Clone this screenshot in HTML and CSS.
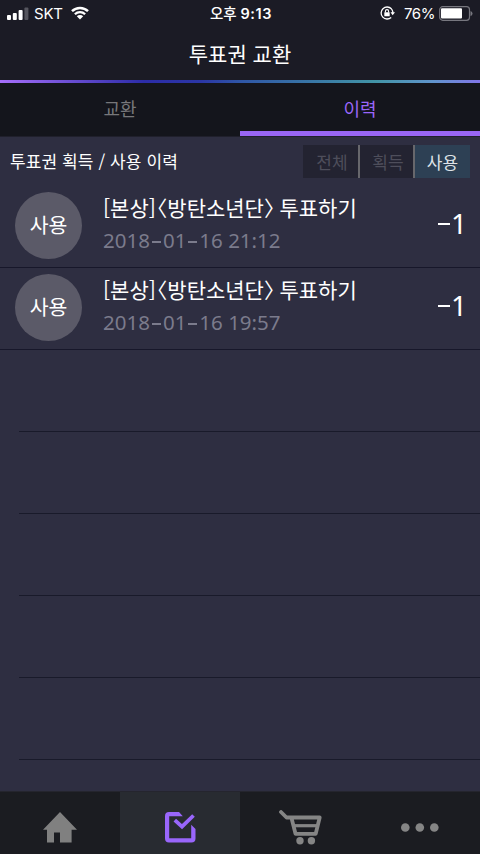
FILE: index.html
```
<!DOCTYPE html>
<html lang="ko">
<head>
    <meta charset="UTF-8">
    <meta name="viewport" content="width=device-width, initial-scale=1.0">
    <title>투표권 교환</title>
    <link rel="stylesheet" href="styles.css">
</head>
<body>
    <div class="status-bar">
        <div class="status-left">
            <svg class="signal" width="22" height="14" viewBox="0 0 22 14">
                <rect x="0" y="8" width="4" height="5" rx="1" fill="#fff"/>
                <rect x="5.8" y="6" width="4" height="7" rx="1" fill="#fff"/>
                <rect x="11.6" y="3" width="4" height="10" rx="1" fill="#fff"/>
                <rect x="17.4" y="0.5" width="4" height="12.5" rx="1" fill="#55555e"/>
            </svg>
            <span class="carrier">SKT</span>
            <svg class="wifi" width="18" height="14" viewBox="0 0 18 14">
                <path d="M1 5.2 A11.4 11.4 0 0 1 17 5.2" fill="none" stroke="#fff" stroke-width="2.5"/>
                <path d="M3.9 8.3 A7.2 7.2 0 0 1 14.1 8.3" fill="none" stroke="#fff" stroke-width="2.3"/>
                <path d="M9 13.5 L5.8 10.3 A4.5 4.5 0 0 1 12.2 10.3 Z" fill="#fff"/>
            </svg>
        </div>
        <div class="status-time">오후 <b>9:13</b></div>
        <div class="status-right">
            <svg class="lock" width="15" height="14" viewBox="0 0 15 14">
                <path d="M11.4 2.8 A6 6 0 1 0 11.2 11.4 M9.2 1.5 A6 6 0 0 1 12.9 7.2" fill="none" stroke="#fff" stroke-width="1.3"/>
                <path d="M10.5 6.3 H15 L12.7 9.2 Z" fill="#fff"/>
                <rect x="4.3" y="6.3" width="5.4" height="4" rx="0.5" fill="#fff"/>
                <path d="M5.4 6.5 V5.2 A1.6 1.6 0 0 1 8.6 5.2 V6.5" fill="none" stroke="#fff" stroke-width="1.1"/>
            </svg>
            <span class="percent">76%</span>
            <svg class="battery" width="34" height="15" viewBox="0 0 34 15">
                <rect x="0.7" y="0.7" width="29.8" height="13.6" rx="3" fill="none" stroke="#77777f" stroke-width="1.2"/>
                <rect x="2" y="2.2" width="21" height="10.4" rx="1" fill="#fff"/>
                <path d="M31.5 5 Q33.5 5.5 33.5 7.5 Q33.5 9.5 31.5 10 Z" fill="#77777f"/>
            </svg>
        </div>
    </div>

    <div class="header">투표권 교환</div>

    <div class="tabs">
        <div class="tab">교환</div>
        <div class="tab active">이력</div>
    </div>

    <div class="content">
        <div class="filter-bar">
            <div class="filter-title">투표권 획득 / 사용 이력</div>
            <div class="filters">
                <div class="filter">전체</div>
                <div class="filter">획득</div>
                <div class="filter selected">사용</div>
            </div>
        </div>

        <div class="row">
            <div class="badge">사용</div>
            <div class="info">
                <div class="title">[본상]<span class="name">〈방탄소년단〉</span>투표하기</div>
                <div class="date">2018<i></i>01<i></i>16 21:12</div>
            </div>
            <div class="amount"><i></i>1</div>
        </div>
        <div class="row">
            <div class="badge">사용</div>
            <div class="info">
                <div class="title">[본상]<span class="name">〈방탄소년단〉</span>투표하기</div>
                <div class="date">2018<i></i>01<i></i>16 19:57</div>
            </div>
            <div class="amount"><i></i>1</div>
        </div>
        <div class="empty"></div>
        <div class="empty"></div>
        <div class="empty"></div>
        <div class="empty"></div>
        <div class="empty"></div>
    </div>

    <div class="bottom-nav">
        <div class="nav-item">
            <svg width="34" height="31" viewBox="0 0 34 31">
                <path d="M17 0 L34 17.8 H28.6 V30.5 H17 V20.5 H11 V30.5 H4 V17.8 H0 Z" fill="#808080"/>
            </svg>
        </div>
        <div class="nav-item current">
            <svg width="31" height="31" viewBox="0 0 31 31">
                <path d="M14 0 H4 Q0 0 0 4 V26.5 Q0 30.5 4 30.5 H26.5 Q30.5 30.5 30.5 26.5 V17 L26.2 12.7 V26.3 H4.2 V4.2 H17.8 Z" fill="#9966fb"/>
                <path d="M9.8 8.2 L17 14.6 L28.5 3.5" fill="none" stroke="#9966fb" stroke-width="3.8"/>
            </svg>
        </div>
        <div class="nav-item">
            <svg width="43" height="35" viewBox="0 0 43 35">
                <path d="M2 2 L7.5 7.5 H40.7 L36.7 23.8 H16.5 L12.5 8" fill="none" stroke="#858585" stroke-width="3.8" stroke-linecap="round" stroke-linejoin="round"/>
                <path d="M14 15.7 H38" fill="none" stroke="#858585" stroke-width="3.2"/>
                <circle cx="21" cy="30.7" r="3.7" fill="#858585"/>
                <circle cx="32.4" cy="30.7" r="3.7" fill="#858585"/>
            </svg>
        </div>
        <div class="nav-item">
            <svg width="38" height="9" viewBox="0 0 38 9">
                <circle cx="4.3" cy="4.5" r="4.3" fill="#858585"/>
                <circle cx="18.8" cy="4.5" r="4.3" fill="#858585"/>
                <circle cx="33.3" cy="4.5" r="4.3" fill="#858585"/>
            </svg>
        </div>
    </div>
</body>
</html>
```
FILE: styles.css
```
* {
    box-sizing: border-box;
}
body {
    font-family: "Noto Sans CJK KR", sans-serif;
    margin: 0;
    height: 854px;
    overflow: hidden;
    display: flex;
    flex-direction: column;
    background: #2e2e41;
    color: #fff;
    font-weight: 400;
}
.status-bar {
    height: 27px;
    display: grid;
    grid-template-columns: 1fr auto 1fr;
    align-items: center;
    padding: 0 7px;
    background: #1b1b25;
    font-family: Inter, "Noto Sans CJK KR", sans-serif;
    font-size: 15px;
}
.status-left,
.status-right {
    display: flex;
    align-items: center;
}
.status-right {
    justify-content: flex-end;
}
.carrier {
    margin-left: 5px;
    letter-spacing: -0.2px;
}
.wifi {
    margin-left: 8px;
    margin-bottom: 2px;
}
.status-time {
    padding-left: 2px;
    font-size: 14.5px;
    font-weight: 500;
    line-height: 25px;
}
.status-time b {
    font-weight: 600;
    letter-spacing: 0.6px;
}
.lock {
    margin-bottom: 2px;
}
.percent {
    margin-left: 9px;
    margin-right: 4px;
    letter-spacing: -0.4px;
}
.header {
    height: 56px;
    line-height: 53px;
    text-align: center;
    font-size: 21px;
    background: #1b1b25;
    border-bottom: 3px solid;
    border-image: linear-gradient(90deg, #a76ffb, #2c2ca8 30%, #2b36a5 42%, #2f56a6 50%, #4294a6 78%, #6094cc 90%, #8275e8) 1;
}
.tabs {
    height: 54px;
    display: flex;
    background: #14151c;
    border-bottom: 1px solid #20202c;
}
.tab {
    flex: 1;
    line-height: 50px;
    text-align: center;
    font-size: 18px;
    color: #77777a;
}
.tab.active {
    color: #9966fb;
    border-bottom: 5px solid #9966f5;
}
.content {
    flex: 1;
}
.filter-bar {
    height: 49px;
    display: flex;
    justify-content: space-between;
    align-items: center;
    padding: 0 10px 1px;
}
.filter-title {
    margin-bottom: 2px;
    font-size: 17px;
    letter-spacing: 0.1px;
}
.filters {
    display: flex;
    height: 33px;
}
.filter {
    width: 55px;
    padding-left: 3px;
    line-height: 33px;
    text-align: center;
    font-size: 17px;
    color: #4e4e5b;
    background: #232331;
    border-right: 2px solid #67676c;
}
.filter:first-child {
    width: 57px;
}
.filter.selected {
    padding-left: 0;
    color: #dfe3e8;
    background: #2d4054;
    border-right: none;
}
.row {
    height: 82px;
    display: flex;
    align-items: center;
    padding: 0 15px 2px;
    border-bottom: 1px solid #17172a;
}
.badge {
    width: 67px;
    height: 67px;
    border-radius: 50%;
    background: #5b5a68;
    line-height: 65px;
    text-align: center;
    font-size: 20.5px;
}
.info {
    flex: 1;
    margin-left: 21px;
    padding-bottom: 5px;
}
.title {
    height: 34px;
    line-height: 34px;
    font-size: 21px;
    white-space: nowrap;
}
.name {
    font-feature-settings: "halt";
    margin-left: 1px;
    margin-right: 5px;
}
.date {
    height: 32px;
    line-height: 32px;
    font-family: "Noto Sans", sans-serif;
    font-size: 20.5px;
    color: #7b7b8c;
}
.date i,
.amount i {
    display: inline-block;
    vertical-align: middle;
    width: 9px;
    height: 2px;
    margin: 0 2px 2px;
    background: #7b7b8c;
}
.amount {
    padding-bottom: 6px;
    margin-right: -2px;
    font-family: "Noto Sans", sans-serif;
    font-size: 28px;
}
.amount i {
    width: 12px;
    margin: 0 1px 5px 0;
    background: #fff;
}
.empty {
    height: 82px;
    margin-left: 19px;
    border-bottom: 1px solid #191a2a;
}
.bottom-nav {
    height: 63px;
    display: flex;
    background: #1b1c21;
    border-top: 1px solid #25252e;
}
.nav-item {
    flex: 1;
    display: flex;
    justify-content: center;
    align-items: center;
    padding-top: 8px;
}
.nav-item.current {
    background: #282b31;
}
```
